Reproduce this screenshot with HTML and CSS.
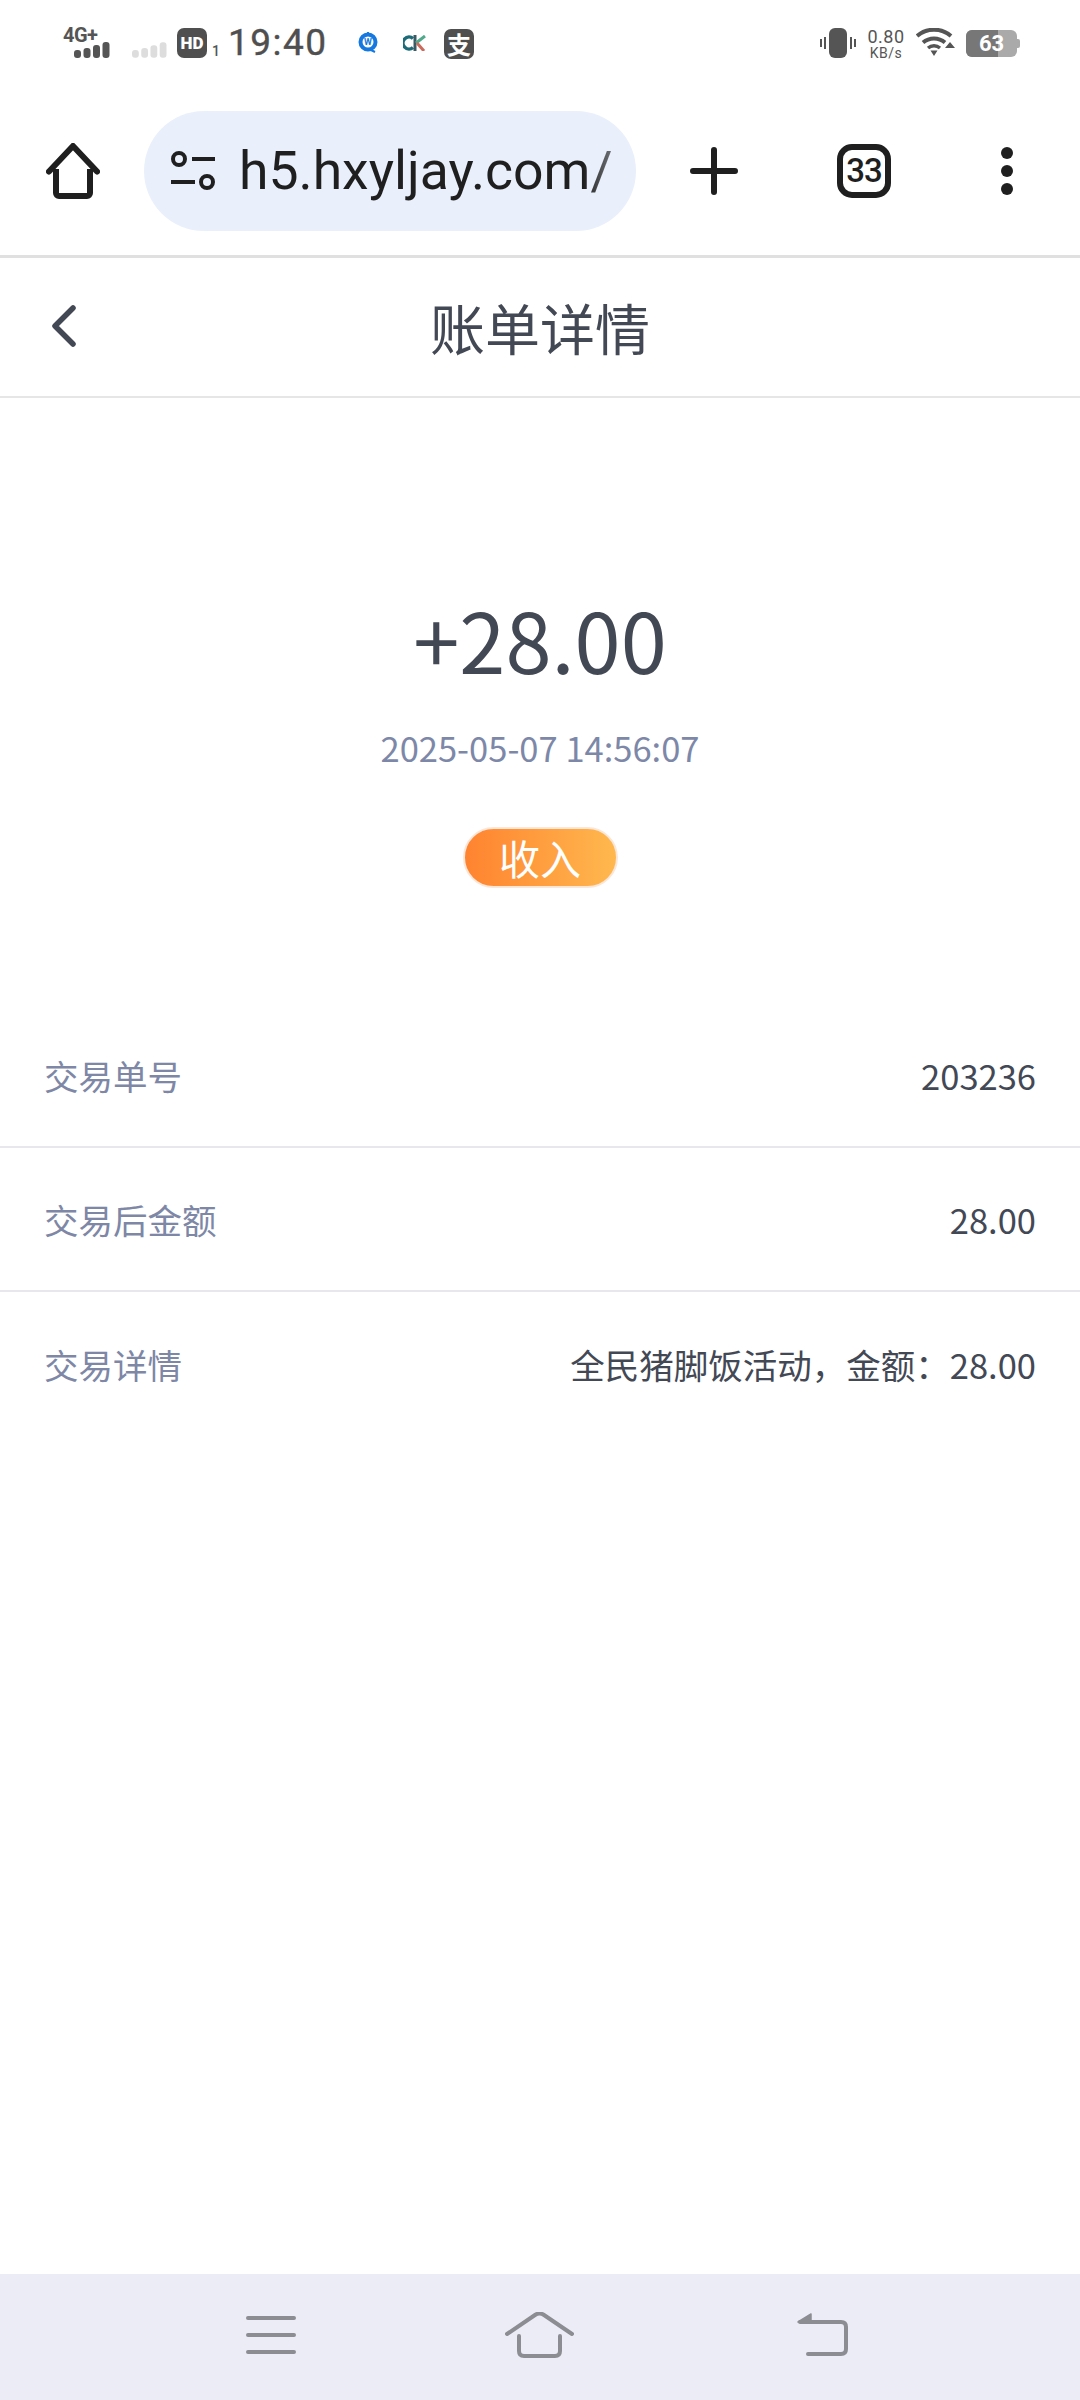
FILE: index.html
```html
<!DOCTYPE html>
<html lang="zh">
<head>
<meta charset="utf-8">
<title>账单详情</title>
<link rel="stylesheet" href="styles.css">
</head>
<body>
<div class="app">
  <header class="status">
    <div class="status-left">
      <div class="net">
        <span class="net-label">4G+</span>
        <svg class="net-bars" width="36" height="16" viewBox="0 0 36 16"><rect x="0" y="8" width="7" height="8" rx="3" fill="#555"/><rect x="9.500" y="6" width="7" height="10" rx="3" fill="#555"/><rect x="19" y="3" width="7" height="13" rx="3" fill="#555"/><rect x="28.500" y="0" width="7" height="16" rx="3" fill="#555"/></svg>
      </div>
      <svg class="sim2" width="35" height="16" viewBox="0 0 36 16"><rect x="0" y="8" width="7" height="8" rx="3" fill="#ddd"/><rect x="9.500" y="6" width="7" height="10" rx="3" fill="#ddd"/><rect x="19" y="3" width="7" height="13" rx="3" fill="#ddd"/><rect x="28.500" y="0" width="7" height="16" rx="3" fill="#ddd"/></svg>
      <span class="hd">HD</span>
      <span class="hd-sub">1</span>
      <span class="clock">19:40</span>
      <svg class="ic-qq" width="20" height="22" viewBox="0 0 20 22"><circle cx="10" cy="11" r="7.500" fill="#fff" stroke="#1478e0" stroke-width="4"/><path d="M10 1v2M13 19l4 2" stroke="#1478e0" stroke-width="2"/><text x="10" y="14" class="ic-qq-text">W</text></svg>
      <svg class="ic-ck" width="23" height="16" viewBox="0 0 23 16"><path d="M10 3.500A6 6 0 1 0 10 12.500" fill="none" stroke="#1c6b78" stroke-width="3.500"/><path d="M12 0v16" stroke="#3a5a66" stroke-width="3"/><path d="M22 1l-9 7" stroke="#4fa98a" stroke-width="3"/><path d="M14 8l7 8" stroke="#c96a5c" stroke-width="3"/></svg>
      <span class="alipay">支</span>
    </div>
    <div class="status-right">
      <svg width="36" height="30" viewBox="0 0 36 30"><rect x="9" y="0" width="18" height="30" rx="6" fill="#555"/><path d="M5 9v12M1 11v8M31 9v12M35 11v8" stroke="#555" stroke-width="2"/></svg>
      <div class="speed"><span class="speed-num">0.80</span><span class="speed-unit">KB/s</span></div>
      <svg width="40" height="28" viewBox="0 0 40 28"><path d="M1 8a26 26 0 0 1 34 0" fill="none" stroke="#555" stroke-width="4"/><path d="M7 14.500a17 17 0 0 1 22 0" fill="none" stroke="#555" stroke-width="4"/><path d="M12 20a9.500 9.500 0 0 1 12 0" fill="none" stroke="#555" stroke-width="3.500"/><path d="M14.500 22.500h7L18 28zM29 20l5-6 5 6z" fill="#555"/></svg>
      <div class="battery"><div class="battery-body"><span class="battery-fill"></span><span class="battery-num">63</span></div><span class="battery-tip"></span></div>
    </div>
  </header>

  <nav class="toolbar">
    <svg class="tb-home" width="54" height="56" viewBox="0 0 54 56"><path d="M3 28.500L27 3l24 25.500" fill="none" stroke="#1f1f1f" stroke-width="6" stroke-linecap="round" stroke-linejoin="round"/><path d="M10 26v24a3 3 0 0 0 3 3h28a3 3 0 0 0 3-3V26" fill="none" stroke="#1f1f1f" stroke-width="6"/></svg>
    <div class="pill">
      <svg class="tune" width="46" height="40" viewBox="0 0 46 40"><circle cx="9" cy="8" r="6" fill="none" stroke="#1f1f1f" stroke-width="4"/><path d="M22 8h23M1 31h24" stroke="#1f1f1f" stroke-width="4"/><circle cx="37" cy="31" r="6" fill="none" stroke="#1f1f1f" stroke-width="4"/></svg>
      <span class="url">h5.hxyljay.com/</span>
    </div>
    <svg class="tb-plus" width="48" height="48" viewBox="0 0 48 48"><path d="M3 24h42M24 3v42" stroke="#1f1f1f" stroke-width="6" stroke-linecap="round"/></svg>
    <div class="tabs">33</div>
    <svg class="tb-more" width="12" height="48" viewBox="0 0 12 48"><circle cx="6" cy="6" r="6" fill="#1f1f1f"/><circle cx="6" cy="24" r="6" fill="#1f1f1f"/><circle cx="6" cy="42" r="6" fill="#1f1f1f"/></svg>
  </nav>

  <div class="titlebar">
    <svg class="back" width="26" height="42" viewBox="0 0 26 42"><path d="M22 3L4 21l18 18" fill="none" stroke="#434855" stroke-width="5.500" stroke-linecap="round" stroke-linejoin="round"/></svg>
    <h1 class="title">账单详情</h1>
  </div>

  <main class="content">
    <section class="hero">
      <div class="amount">+28.00</div>
      <div class="date">2025-05-07 14:56:07</div>
      <div class="tag">收入</div>
    </section>
    <section class="rows">
      <div class="row"><span class="label">交易单号</span><span class="value">203236</span></div>
      <div class="row"><span class="label">交易后金额</span><span class="value">28.00</span></div>
      <div class="row row-last"><span class="label">交易详情</span><span class="value">全民猪脚饭活动，金额：28.00</span></div>
    </section>
  </main>

  <footer class="navbar">
    <svg class="nav-menu" width="50" height="40" viewBox="0 0 50 40"><path d="M2 3h46M2 20h46M2 37h46" stroke="#8c8d93" stroke-width="4" stroke-linecap="round"/></svg>
    <svg class="nav-home" width="69" height="46" viewBox="0 0 69 46"><path d="M2 22L30 3q4.500-3 9 0l28 19" fill="none" stroke="#8c8d93" stroke-width="4" stroke-linecap="round"/><path d="M14 24v15q0 5 5 5h31q5 0 5-5V24" fill="none" stroke="#8c8d93" stroke-width="4" stroke-linecap="round"/></svg>
    <svg class="nav-back" width="52" height="44" viewBox="0 0 52 44"><path d="M15 1L2 9h13z" fill="#8c8d93" stroke="#8c8d93" stroke-width="1.500" stroke-linejoin="round"/><path d="M4 9h41q5 0 5 5v22q0 5-5 5H12" fill="none" stroke="#8c8d93" stroke-width="4" stroke-linecap="round"/></svg>
  </footer>
</div>
</body>
</html>
```
FILE: styles.css
```css
* { box-sizing: border-box; }
html, body { margin: 0; padding: 0; background: #fff; }
.app {
  width: 1080px;
  height: 2400px;
  display: flex;
  flex-direction: column;
  font-family: "Noto Sans CJK SC", "Noto Sans", sans-serif;
  overflow: hidden;
}

/* status bar */
.status {
  height: 86px;
  padding: 28px 60px 0 63px;
  display: flex;
  justify-content: space-between;
  align-items: flex-start;
  flex: none;
}
.status-left, .status-right { display: flex; align-items: flex-start; }
.net { width: 47px; position: relative; height: 30px; }
.net-label {
  position: absolute; left: 0; top: -4px;
  font: 700 20px/22px "Roboto", sans-serif; color: #555; letter-spacing: -0.500px;
}
.net-bars { position: absolute; right: 0; top: 14px; }
.sim2 { margin: 14px 0 0 22px; }
.hd {
  margin-left: 10px; width: 30px; height: 30px; border-radius: 7px; background: #4f4f4f; color: #fff;
  font: 900 17px/30px "Roboto", sans-serif; text-align: center;
}
.hd-sub { margin: 16px 0 0 5px; font: 500 14px/14px "Roboto", sans-serif; color: #555; width: 6px; }
.clock { margin: -1px 0 0 10px; font: 400 37px/32px "Roboto", sans-serif; color: #4f4f4f; letter-spacing: 1.500px; width: 98px; -webkit-text-stroke: 0.400px #4f4f4f; }
.ic-qq { margin: 3px 0 0 32px; }
.ic-qq-text { font: 700 9px "Roboto", sans-serif; fill: #1478e0; text-anchor: middle; }
.ic-ck { margin: 7px 0 0 25px; }
.alipay {
  margin: 1px 0 0 18px; width: 30px; height: 30px; border-radius: 7px; background: #4f4f4f; color: #fff;
  font: 700 24px/29px "Noto Sans CJK SC", sans-serif; text-align: center;
}
.status-right { gap: 10px; }
.speed { display: flex; flex-direction: column; align-items: center; width: 40px; color: #555; font-family: "Roboto", sans-serif; }
.speed-num { font-size: 18px; line-height: 18px; letter-spacing: 0.500px; }
.speed-unit { font-size: 14px; line-height: 14px; letter-spacing: 0.500px; }
.battery { display: flex; align-items: center; margin-top: 2px; }
.battery-body { position: relative; width: 51px; height: 27px; border-radius: 6px; background: #aaa; overflow: hidden; text-align: center; }
.battery-fill { position: absolute; left: 0; top: 0; bottom: 0; width: 32px; background: #777; }
.battery-num { position: relative; font: 700 22px/27px "Roboto", sans-serif; color: #fff; }
.battery-tip { width: 3px; height: 9px; background: #aaa; border-radius: 0 2px 2px 0; }

/* browser toolbar */
.toolbar {
  height: 172px;
  flex: none;
  display: flex;
  align-items: center;
  border-bottom: 3px solid #e0e0e0;
}
.tb-home { margin-left: 46px; flex: none; }
.pill {
  margin-left: 44px;
  width: 492px;
  height: 120px;
  padding: 0 20px 0 26px;
  border-radius: 60px;
  background: #e9f0fb;
  display: flex;
  align-items: center;
  flex: none;
}
.tune { flex: none; }
.url {
  margin-left: 23px;
  font: 400 53.500px/64px "Roboto", sans-serif;
  color: #1f1f1f;
  white-space: nowrap;
  -webkit-mask-image: linear-gradient(90deg, #000 92%, rgba(0,0,0,0.6));
  mask-image: linear-gradient(90deg, #000 92%, rgba(0,0,0,0.6));
}
.tb-plus { margin-left: 54px; flex: none; }
.tabs {
  margin-left: 99px;
  width: 54px; height: 54px;
  border: 6px solid #1f1f1f;
  border-radius: 15px;
  font: 500 33px/42px "Roboto", sans-serif;
  letter-spacing: -1px;
  color: #1f1f1f;
  text-align: center;
  flex: none;
}
.tb-more { margin-left: 110px; flex: none; }

/* title bar */
.titlebar {
  height: 140px;
  flex: none;
  display: flex;
  align-items: center;
  justify-content: center;
  border-bottom: 2px solid #e6e6e6;
  position: relative;
}
.back { position: absolute; left: 51px; top: 47px; }
.title { margin: 0 0 2px; font-size: 55px; line-height: 76px; font-weight: 400; color: #434855; }

/* content */
.content { flex: 1; display: flex; flex-direction: column; }
.hero { display: flex; flex-direction: column; align-items: center; padding-top: 180px; }
.amount { font-size: 83px; line-height: 120px; font-weight: 400; color: #434855; }
.date { margin-top: 24px; font-size: 34.500px; line-height: 50px; color: #7d88a8; }
.tag {
  margin-top: 55px;
  width: 155px; height: 61px;
  border-radius: 31px;
  border: 2px solid #fbe6d8;
  background: linear-gradient(90deg, #ff8330, #ffb84e);
  color: #fff;
  font-size: 41px; line-height: 57px;
  text-align: center;
  font-weight: 400;
}
.rows { margin-top: 116px; }
.row {
  height: 144px;
  padding: 0 44px;
  display: flex;
  align-items: center;
  justify-content: space-between;
  border-bottom: 2px solid #e8e8ec;
}
.row-last { border-bottom: 0; }
.label { font-size: 34.500px; color: #7e87a6; }
.value { font-size: 34.500px; color: #434855; }

/* system nav */
.navbar {
  height: 126px;
  flex: none;
  background: #ebecf6;
  display: flex;
  align-items: center;
  padding: 0 0 4px 246px;
  margin-top: auto;
}
.nav-home { margin-left: 209px; }
.nav-back { margin-left: 222px; }
```
